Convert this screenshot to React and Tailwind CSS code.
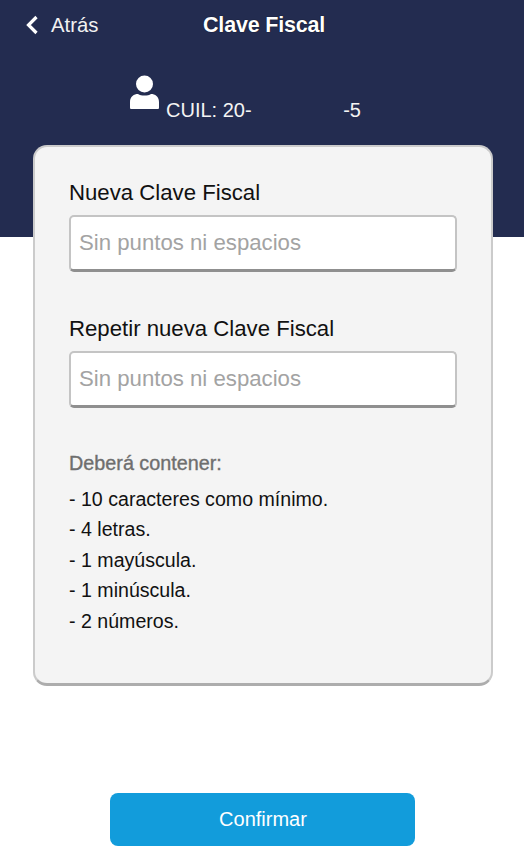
const inputClass =
  "w-full h-[57px] bg-white rounded-[5px] border-2 border-[#c4c4c4] border-b-[3px] border-b-[#8f8f8f] px-[8px] text-[22.2px] text-black outline-none placeholder:text-[#a3a3a3]";

const Field = ({ label, className = "" }) => (
  <div className={className}>
    <label className="block text-[22.2px] leading-[26px] text-[#111] mb-[9px]">{label}</label>
    <input className={inputClass} placeholder="Sin puntos ni espacios" />
  </div>
);

const App = () => {
  const rules = [
    "- 10 caracteres como mínimo.",
    "- 4 letras.",
    "- 1 mayúscula.",
    "- 1 minúscula.",
    "- 2 números.",
  ];

  return (
    <div className="w-[524px] h-[846px] overflow-hidden bg-white font-['Liberation_Sans',sans-serif]">
      {/* Header */}
      <header className="h-[237px] bg-[#232c50] text-white">
        <div className="relative flex items-center justify-center h-[50px] pl-[4px]">
          <button className="absolute left-[25px] top-[13px] flex items-center gap-[12px] text-[20.3px] leading-[24px] text-[#f2f2f2]">
            <svg width="14" height="20" viewBox="0 0 14 20" fill="none">
              <path d="M11.5 2 L3.5 10 L11.5 18" stroke="white" strokeWidth="3.2" />
            </svg>
            Atrás
          </button>
          <h1 className="text-[21.5px] font-bold leading-[26px] tracking-[-0.2px] [text-shadow:0_0_1px_#000]">Clave Fiscal</h1>
        </div>
        <div className="flex items-end pl-[129px] pt-[25px]">
          <svg width="31" height="36" viewBox="0 0 31 36" fill="white">
            <circle cx="15.5" cy="9" r="8.5" />
            <path d="M1 27 C1 21.5 5 19 9 19 C12 21 19 21 22 19 C26 19 30 21.5 30 27 L30 32.5 C30 33.5 29.5 34 28.5 34 L2.5 34 C1.5 34 1 33.5 1 32.5 Z" />
          </svg>
          <p className="ml-[6px] mb-[-11px] w-[195px] flex justify-between text-[20px] leading-[24px] text-[#f4f4f4]">
            <span>CUIL: 20-</span>
            <span>-5</span>
          </p>
        </div>
      </header>

      {/* Card */}
      <main className="ml-[33px] w-[460px] -mt-[92px] relative h-[541px] rounded-[14px] bg-[#f4f4f4] border-2 border-[#cbcbcb] border-b-[3px] border-b-[#adadad] px-[34px] pt-[33px]">
        <Field label="Nueva Clave Fiscal" />
        <Field label="Repetir nueva Clave Fiscal" className="mt-[44px]" />
        <h2 className="mt-[43px] text-[19.8px] leading-[24px] text-[#6e6e6e] [-webkit-text-stroke:0.35px_#6e6e6e]">Deberá contener:</h2>
        <ul className="mt-[8.5px] text-[19.6px] leading-[30.5px] text-[#111]">
          {rules.map((rule) => (
            <li key={rule}>{rule}</li>
          ))}
        </ul>
      </main>

      {/* Footer */}
      <div className="flex justify-center mt-[107px]">
        <button className="w-[305px] h-[53px] pb-[2px] pl-[2px] rounded-[8px] bg-[#129cdb] text-[20px] text-white">Confirmar</button>
      </div>
    </div>
  );
};

export default App;
